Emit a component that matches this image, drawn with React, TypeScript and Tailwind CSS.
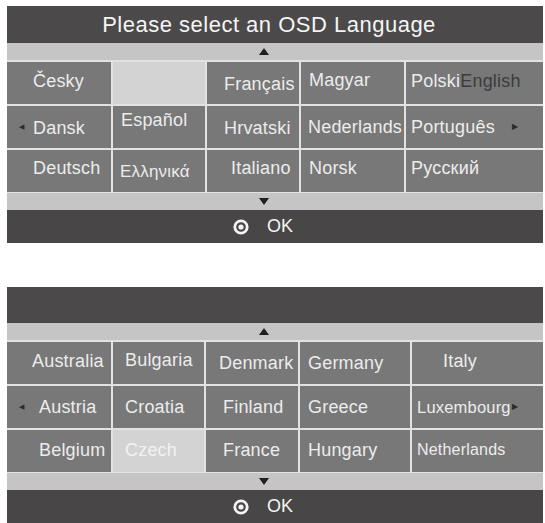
import React from "react";

type Cell = {
  label?: string;
  extra?: string;
  w: string;
  cls: string;
  active?: boolean;
  left?: boolean;
  right?: boolean;
};

const topRows: Cell[][] = [
  [
    { label: "Česky", w: "w-[104px]", cls: "pl-[26px] pb-[4px]" },
    { w: "w-[92px]", cls: "", active: true },
    { label: "Français", w: "w-[92px]", cls: "pl-[17px] pt-[2px]" },
    { label: "Magyar", w: "w-[103px]", cls: "pl-[8px] pb-[6px]" },
    { label: "Polski", extra: "English", w: "flex-1", cls: "pl-[5px] pb-[4px]" },
  ],
  [
    { label: "Dansk", w: "w-[104px]", cls: "pl-[26px] pt-[2px]", left: true },
    { label: "Español", w: "w-[92px]", cls: "pl-[8px] pb-[14px]" },
    { label: "Hrvatski", w: "w-[92px]", cls: "pl-[17px] pt-[2px]" },
    { label: "Nederlands", w: "w-[103px]", cls: "pl-[7px]" },
    { label: "Português", w: "flex-1", cls: "pl-[5px]", right: true },
  ],
  [
    { label: "Deutsch", w: "w-[104px]", cls: "pl-[26px] pb-[6px]" },
    { label: "Ελληνικά", w: "w-[92px]", cls: "pl-[7px] pt-[2px] text-[17px]" },
    { label: "Italiano", w: "w-[92px]", cls: "pl-[24px] pb-[6px]" },
    { label: "Norsk", w: "w-[103px]", cls: "pl-[8px] pb-[6px]" },
    { label: "Русский", w: "flex-1", cls: "pl-[5px] pb-[6px]" },
  ],
];

const bottomRows: Cell[][] = [
  [
    { label: "Australia", w: "w-[104px]", cls: "pl-[25px] pb-[4px]" },
    { label: "Bulgaria", w: "w-[91px]", cls: "pl-[12px] pb-[6px]" },
    { label: "Denmark", w: "w-[92px]", cls: "pl-[13px] pt-[1px]" },
    { label: "Germany", w: "w-[110px]", cls: "pl-[8px] pt-[1px]" },
    { label: "Italy", w: "flex-1", cls: "pl-[31px] pb-[4px]" },
  ],
  [
    { label: "Austria", w: "w-[104px]", cls: "pl-[32px] pt-[1px]", left: true },
    { label: "Croatia", w: "w-[91px]", cls: "pl-[12px] pt-[1px]" },
    { label: "Finland", w: "w-[92px]", cls: "pl-[17px] pt-[1px]" },
    { label: "Greece", w: "w-[110px]", cls: "pl-[8px] pt-[1px]" },
    { label: "Luxembourg", w: "flex-1", cls: "pl-[5px] pt-[1px] text-[16.5px]", right: true },
  ],
  [
    { label: "Belgium", w: "w-[104px]", cls: "pl-[32px] pb-[2px]" },
    { label: "Czech", w: "w-[91px]", cls: "pl-[12px] pb-[2px]", active: true },
    { label: "France", w: "w-[92px]", cls: "pl-[17px] pb-[2px]" },
    { label: "Hungary", w: "w-[110px]", cls: "pl-[8px] pb-[2px]" },
    { label: "Netherlands", w: "flex-1", cls: "pl-[5px] pb-[2px] text-[16px]" },
  ],
];

function UpTriangle() {
  return (
    <svg width="10" height="7" viewBox="0 0 10 7">
      <polygon points="5,0 10,7 0,7" fill="#1e1e1e" />
    </svg>
  );
}

function DownTriangle() {
  return (
    <svg width="10" height="7" viewBox="0 0 10 7">
      <polygon points="0,0 10,0 5,7" fill="#1e1e1e" />
    </svg>
  );
}

function OkIcon() {
  return (
    <svg width="16" height="16" viewBox="0 0 16 16">
      <circle cx="8" cy="8" r="6.2" fill="none" stroke="#f4f4f4" strokeWidth="2.8" />
      <circle cx="8" cy="8" r="2.6" fill="#f4f4f4" />
    </svg>
  );
}

function GridCell({ c }: { c: Cell }) {
  return (
    <div
      className={`relative flex h-full items-center ${c.w} ${c.cls} ${
        c.active ? "bg-[#d3d3d3] text-[#f2f2f2]" : "bg-[#787878] text-[#ececec]"
      }`}
    >
      {c.left && (
        <span className="absolute left-[12px] top-1/2 -translate-y-1/2 text-[7px] text-[#2a2a2a]">◀</span>
      )}
      {c.label && (
        <span className="whitespace-nowrap">
          {c.label}
          {c.extra && <span className="text-[#3c3c3c]">{c.extra}</span>}
        </span>
      )}
      {c.right && (
        <span className="absolute right-[25px] top-1/2 -translate-y-1/2 text-[8px] text-[#2a2a2a]">▶</span>
      )}
    </div>
  );
}

function Panel({
  title,
  rows,
  headerH,
}: {
  title?: string;
  rows: Cell[][];
  headerH: string;
}) {
  return (
    <div className="ml-[7px] w-[536px] bg-[#e2e2e2]">
      <div
        className={`flex ${headerH} items-center justify-center bg-[#4b4949] pr-[12px] text-[22px] tracking-[0.5px] text-[#f5f5f5]`}
      >
        {title}
      </div>
      <div className="flex h-[17px] items-center justify-center bg-[#c5c5c5] pr-[22px]">
        <UpTriangle />
      </div>
      <div className="flex flex-col gap-[2px] pt-[2px] pb-[1px]">
        {rows.map((r, i) => (
          <div key={i} className="flex h-[42px] gap-[2px] text-[18px] tracking-[0.2px]">
            {r.map((c, j) => (
              <GridCell key={j} c={c} />
            ))}
          </div>
        ))}
      </div>
      <div className="flex h-[17px] items-center justify-center bg-[#c5c5c5] pr-[22px]">
        <DownTriangle />
      </div>
      <div className="flex h-[33px] items-center justify-center gap-[18px] bg-[#484646] pr-[24px] text-[18px] text-[#f4f4f4]">
        <OkIcon />
        <span>OK</span>
      </div>
    </div>
  );
}

export default function App() {
  return (
    <div
      className="h-[523px] w-[545px] overflow-hidden bg-white pt-[6px]"
      style={{ fontFamily: '"Liberation Sans", Arial, sans-serif' }}
    >
      <Panel title="Please select an OSD Language" rows={topRows} headerH="h-[37px]" />
      <div className="h-[44px]" />
      <Panel rows={bottomRows} headerH="h-[36px]" />
    </div>
  );
}
